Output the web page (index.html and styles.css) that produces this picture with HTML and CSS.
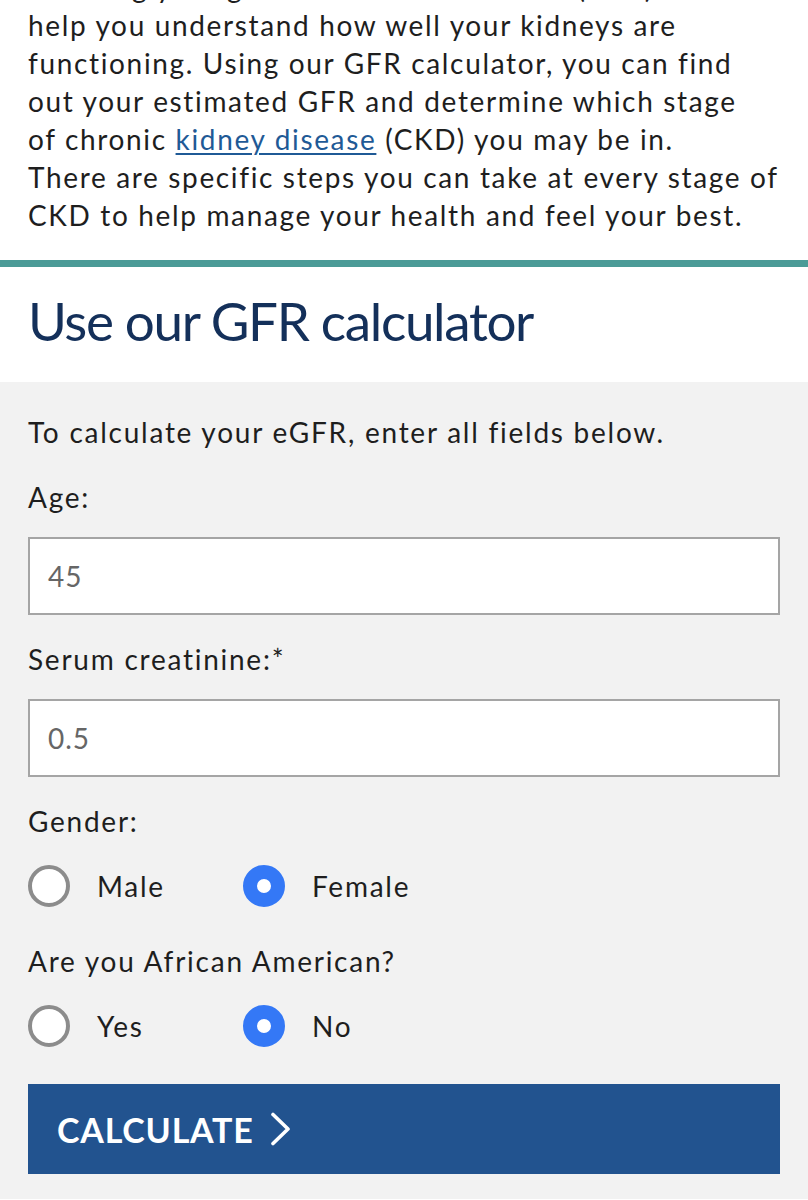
FILE: index.html
```html
<!DOCTYPE html>
<html lang="en">
<head>
<meta charset="utf-8">
<title>GFR calculator</title>
<link rel="stylesheet" href="styles.css">
</head>
<body>
<p class="intro">Knowing your glomerular filtration rate (GFR) can<br>help you understand how well your kidneys are<br>functioning. Using our GFR calculator, you can find<br>out your estimated GFR and determine which stage<br>of chronic <a href="#" class="link">kidney disease</a> (CKD) you may be in.<br>There are specific steps you can take at every stage of<br>CKD to help manage your health and feel your best.</p>
<div class="divider"></div>
<div class="title-wrap">
  <h2 class="title">Use our GFR calculator</h2>
</div>
<form class="calc">
  <p class="lead">To calculate your eGFR, enter all fields below.</p>
  <label class="label">Age:</label>
  <div class="input">45</div>
  <label class="label">Serum creatinine:*</label>
  <div class="input">0.5</div>
  <label class="label">Gender:</label>
  <div class="radios">
    <span class="opt"><span class="radio"></span><span class="opt-text">Male</span></span>
    <span class="opt"><span class="radio checked"></span><span class="opt-text">Female</span></span>
  </div>
  <label class="label label-gap">Are you African American?</label>
  <div class="radios">
    <span class="opt"><span class="radio"></span><span class="opt-text">Yes</span></span>
    <span class="opt"><span class="radio checked"></span><span class="opt-text">No</span></span>
  </div>
  <button type="button" class="btn"><span class="btn-text">CALCULATE</span>
    <svg class="chev" width="22" height="34" viewBox="0 0 22 34"><path d="M3 2.5 L18 17 L3 31.5" fill="none" stroke="#fff" stroke-width="3.6" stroke-linecap="round" stroke-linejoin="round"/></svg>
  </button>
</form>
</body>
</html>
```
FILE: styles.css
```css
* { box-sizing: border-box; }
html, body { margin: 0; padding: 0; }
body {
  width: 808px;
  height: 1200px;
  overflow: hidden;
  background: #ffffff;
  font-family: Lato, "Open Sans", sans-serif;
  color: #1e1e1e;
}
.intro {
  margin: -32px 0 26px 0;
  padding: 0 28px;
  font-size: 28px;
  line-height: 38px;
  letter-spacing: 1.65px;
  white-space: nowrap;
}
.link {
  color: #1f5a96;
  text-decoration: underline;
  text-underline-offset: 3px;
  text-decoration-thickness: 2px;
}
.divider {
  height: 7px;
  background: #4b9b97;
}
.title-wrap {
  height: 115px;
  display: flex;
  align-items: center;
  padding: 0 28px;
}
.title {
  margin: 0;
  font-size: 53px;
  font-weight: 400;
  color: #14305a;
  letter-spacing: -1.35px;
  padding-bottom: 8px;
}
.calc {
  background: #f2f2f2;
  padding: 31px 28px 25px 28px;
  display: flex;
  flex-direction: column;
}
.lead, .label {
  margin: 0;
  font-size: 28px;
  line-height: 38px;
  letter-spacing: 1.75px;
}
.label { margin-top: 27px; display: block; }
.input {
  margin-top: 21px;
  height: 78px;
  background: #fff;
  border: 2px solid #a5a5a5;
  padding: 0 18px;
  display: flex;
  align-items: center;
  font-size: 28px;
  color: #666;
  letter-spacing: 1px;
}
.input + .label { margin-top: 25px; }
.radios {
  margin-top: 25px;
  display: flex;
  align-items: center;
  height: 42px;
}
.opt {
  display: flex;
  align-items: center;
  width: 215px;
}
.opt-text {
  margin-left: 27px;
  font-size: 28px;
  letter-spacing: 1.75px;
}
.radio {
  width: 42px;
  height: 42px;
  border-radius: 50%;
  border: 4px solid #8c8c8c;
  background: #fff;
  flex: none;
}
.radio.checked {
  border: 14px solid #3478f6;
  background: #fff;
}
.label-gap { margin-top: 35px; }
.btn {
  margin-top: 37px;
  height: 90px;
  border: none;
  background: #22538f;
  color: #fff;
  display: flex;
  align-items: center;
  padding: 0 29px;
  font-family: Lato, sans-serif;
  cursor: pointer;
}
.btn-text {
  font-size: 34px;
  font-weight: 700;
  letter-spacing: 0.8px;
}
.chev { margin-left: 16px; }
```
